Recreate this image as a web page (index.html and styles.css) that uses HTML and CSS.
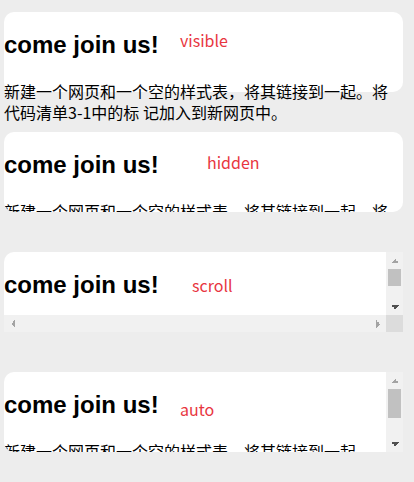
FILE: index.html
```html
<!DOCTYPE html>
<html lang="zh-CN">
<head>
<meta charset="utf-8">
<title>overflow</title>
<link rel="stylesheet" href="styles.css">
</head>
<body>
<main class="page">
  <section class="box box-visible">
    <div class="viewport">
      <h2 class="title">come join us!</h2>
      <p class="text">新建一个网页和一个空的样式表，将其链接到一起。将代码清单3-1中的标 记加入到新网页中。</p>
      <span class="label label-visible">visible</span>
    </div>
  </section>

  <section class="box box-hidden">
    <div class="viewport">
      <h2 class="title">come join us!</h2>
      <p class="text">新建一个网页和一个空的样式表，将其链接到一起。将代码清单3-1中的标 记加入到新网页中。</p>
      <span class="label label-hidden">hidden</span>
    </div>
  </section>

  <section class="box box-scroll">
    <div class="viewport">
      <h2 class="title">come join us!</h2>
      <p class="text">新建一个网页和一个空的样式表，将其链接到一起。将代码清单3-1中的标 记加入到新网页中。</p>
      <span class="label label-scroll">scroll</span>
    </div>
    <div class="vbar">
      <div class="btn btn-up"></div>
      <div class="track"><div class="thumb"></div></div>
      <div class="btn btn-down"></div>
    </div>
    <div class="hbar">
      <div class="btn btn-left"></div>
      <div class="track"></div>
      <div class="btn btn-right"></div>
    </div>
    <div class="corner"></div>
  </section>

  <section class="box box-auto">
    <div class="viewport">
      <h2 class="title">come join us!</h2>
      <p class="text">新建一个网页和一个空的样式表，将其链接到一起。将代码清单3-1中的标 记加入到新网页中。</p>
      <span class="label label-auto">auto</span>
    </div>
    <div class="vbar">
      <div class="btn btn-up"></div>
      <div class="track"><div class="thumb"></div></div>
      <div class="btn btn-down"></div>
    </div>
  </section>
</main>
</body>
</html>
```

FILE: styles.css
```css
html, body {
  margin: 0;
  padding: 0;
  background: #ededed;
}

.page {
  display: flex;
  flex-direction: column;
  gap: 40px;
  padding: 12px 0 0 4px;
}

.box {
  width: 399px;
  height: 80px;
  color: #000;
}

.viewport {
  position: relative;
  display: flow-root;
  background: #fff;
  min-width: 0;
  min-height: 0;
}

.box-visible .viewport {
  height: 80px;
  border-radius: 10px;
  overflow: visible;
}

.box-hidden .viewport {
  height: 80px;
  border-radius: 10px;
  overflow: hidden;
}

.box-scroll {
  display: grid;
  grid-template-columns: 1fr 17px;
  grid-template-rows: 1fr 17px;
}

.box-scroll .viewport {
  overflow: hidden;
  border-radius: 10px 0 0 0;
}

.box-auto {
  display: grid;
  grid-template-columns: 1fr 17px;
}

.box-auto .viewport {
  overflow: hidden;
  border-radius: 10px 0 0 10px;
}

.title {
  margin: 19px 0 22px;
  font-family: "Liberation Sans", Arial, sans-serif;
  font-weight: bold;
  font-size: 24px;
  line-height: 28px;
}

.text {
  margin: 0 0 16px;
  font-family: "Noto Sans CJK SC", sans-serif;
  font-size: 16px;
  line-height: 21px;
}

.label {
  position: absolute;
  font-family: "Noto Sans CJK SC", sans-serif;
  font-size: 16px;
  line-height: 16px;
  color: #e8363f;
  white-space: nowrap;
}

.label-visible { left: 176px; top: 20px; }
.label-hidden { left: 203px; top: 22px; }
.label-scroll { left: 188px; top: 25px; }
.label-auto { left: 176px; top: 29px; }

/* fake scrollbars */
.vbar {
  display: flex;
  flex-direction: column;
  background: #f1f1f1;
}

.vbar .track {
  flex: 1;
  padding: 0 2px;
}

.box-scroll .thumb { height: 17px; }
.box-auto .thumb { height: 29px; }

.thumb {
  background: #c1c1c1;
}

.hbar {
  display: flex;
  background: #f1f1f1;
}

.hbar .track {
  flex: 1;
}

.btn {
  flex: none;
  width: 17px;
  height: 17px;
  background-repeat: no-repeat;
  background-position: center;
}

.btn-up {
  background-image: conic-gradient(from 135deg at 50% 0, #a3a3a3 90deg, transparent 0);
  background-size: 8px 4px;
}

.btn-down {
  background-image: conic-gradient(from -45deg at 50% 100%, #505050 90deg, transparent 0);
  background-size: 8px 4px;
}

.btn-left {
  background-image: conic-gradient(from 45deg at 0 50%, #a3a3a3 90deg, transparent 0);
  background-size: 4px 8px;
}

.btn-right {
  background-image: conic-gradient(from 225deg at 100% 50%, #a3a3a3 90deg, transparent 0);
  background-size: 4px 8px;
}

.corner {
  background: #dcdcdc;
}
```
